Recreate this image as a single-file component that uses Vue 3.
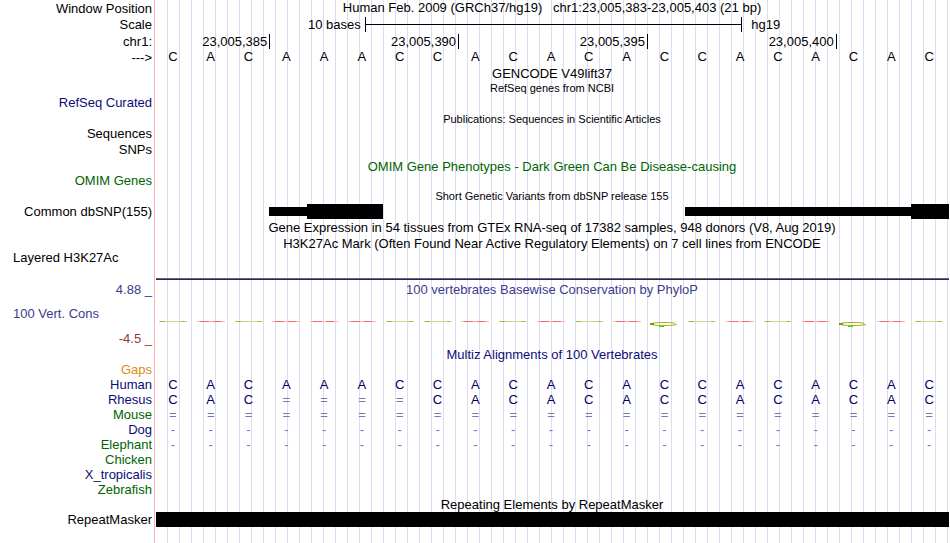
<script setup>
const sequence = 'CACAAACCACACACCACACAC'.split('')

const ticks = [
  { text: '23,005,385', cls: 'tick-a' },
  { text: '23,005,390', cls: 'tick-b' },
  { text: '23,005,395', cls: 'tick-c' },
  { text: '23,005,400', cls: 'tick-d' },
]

// one row for each species, in the order of the alignment
const species = [
  { name: 'Gaps', color: 'orange', bases: [] },
  { name: 'Human', color: 'navy', bases: sequence },
  { name: 'Rhesus', color: 'navy', bases: 'CAC====CACACACCACACAC'.split('') },
  { name: 'Mouse', color: 'green', bases: '='.repeat(21).split('') },
  { name: 'Dog', color: 'navy', bases: '-'.repeat(21).split('') },
  { name: 'Elephant', color: 'green', bases: '-'.repeat(21).split('') },
  { name: 'Chicken', color: 'green', bases: [] },
  { name: 'X_tropicalis', color: 'navy', bases: [] },
  { name: 'Zebrafish', color: 'green', bases: [] },
]

// positions where the conservation score drops below zero
const lowScores = [13, 18]

const isGap = (base) => base === '=' || base === '-'
</script>

<template>
  <main class="browser">
    <div class="row h16">
      <div class="label">Window Position</div>
      <div class="title raised">Human Feb. 2009 (GRCh37/hg19) &nbsp; chr1:23,005,383-23,005,403 (21 bp)</div>
    </div>
    <div class="row h17">
      <div class="label">Scale</div>
      <div class="ruler">
        <span class="scale-text">10 bases</span>
        <span class="scale-bar"></span>
        <span class="scale-db">hg19</span>
      </div>
    </div>
    <div class="row h17">
      <div class="label">chr1:</div>
      <div class="ruler">
        <span v-for="tick in ticks" :key="tick.text" class="tick" :class="tick.cls">{{ tick.text }}</span>
      </div>
    </div>
    <div class="row h15">
      <div class="label">---&gt;</div>
      <div class="bases raised">
        <span v-for="(base, i) in sequence" :key="i">{{ base }}</span>
      </div>
    </div>

    <div class="row h16">
      <div class="title">GENCODE V49lift37</div>
    </div>
    <div class="row h13">
      <div class="title small">RefSeq genes from NCBI</div>
    </div>
    <div class="row h16">
      <div class="label navy">RefSeq Curated</div>
    </div>
    <div class="row h16">
      <div class="title small">Publications: Sequences in Scientific Articles</div>
    </div>
    <div class="row h15">
      <div class="label">Sequences</div>
    </div>
    <div class="row h17">
      <div class="label">SNPs</div>
    </div>
    <div class="row h16">
      <div class="title green">OMIM Gene Phenotypes - Dark Green Can Be Disease-causing</div>
    </div>
    <div class="row h13">
      <div class="label green">OMIM Genes</div>
    </div>

    <div class="row h17">
      <div class="title small">Short Genetic Variants from dbSNP release 155</div>
    </div>
    <div class="row h15">
      <div class="label">Common dbSNP(155)</div>
      <div class="variants">
        <span class="thin first-thin"></span>
        <span class="thick first-thick"></span>
        <span class="thin second-thin"></span>
        <span class="thick second-thick"></span>
      </div>
    </div>
    <div class="row h17">
      <div class="title">Gene Expression in 54 tissues from GTEx RNA-seq of 17382 samples, 948 donors (V8, Aug 2019)</div>
    </div>
    <div class="row h15">
      <div class="title">H3K27Ac Mark (Often Found Near Active Regulatory Elements) on 7 cell lines from ENCODE</div>
    </div>
    <div class="row h13">
      <div class="label left">Layered H3K27Ac</div>
    </div>
    <div class="row h17">
      <div class="signal"></div>
    </div>

    <div class="row h16">
      <div class="label violet">4.88 _</div>
      <div class="title violet">100 vertebrates Basewise Conservation by PhyloP</div>
    </div>
    <div class="row h33">
      <div class="label left violet">100 Vert. Cons</div>
      <div class="bases scores">
        <svg v-for="(base, i) in sequence" :key="i" class="score" viewBox="0 0 30 8">
          <template v-if="lowScores.includes(i)">
            <path d="M26 3.5C24 2.5 20 2.5 15 2.5C7 2.5 3 2.9 3 4C3 5.2 8 5.5 15 5.5C21 5.5 25 5.3 28 4.4" fill="none" stroke="#a8a81c" />
            <path d="M1 3h4v2h-4z" fill="#8f8f00" />
            <path d="M10 6h5v1h-5z" fill="#00f000" />
          </template>
          <template v-else-if="base === 'A'">
            <path d="M1 1h28v1h-28z" fill="#ffb0b0" />
            <path d="M4 1h9v1h-9zM17 1h8v1h-8z" fill="#ff6868" />
          </template>
          <template v-else>
            <path d="M1 1h28v1h-28z" fill="#d4d48c" />
            <path d="M2 1h5v1h-5zM24 1h3v1h-3z" fill="#b0b03c" />
          </template>
        </svg>
      </div>
    </div>
    <div class="row h16">
      <div class="label maroon">-4.5 _</div>
    </div>

    <div class="row h16">
      <div class="title navy">Multiz Alignments of 100 Vertebrates</div>
    </div>
    <div v-for="row in species" :key="row.name" class="row h15">
      <div class="label" :class="row.color">{{ row.name }}</div>
      <div class="bases navy">
        <span v-for="(base, i) in row.bases" :key="i" :class="{ gap: isGap(base) }">{{ base }}</span>
      </div>
    </div>

    <div class="row h15">
      <div class="title">Repeating Elements by RepeatMasker</div>
    </div>
    <div class="row h15">
      <div class="label">RepeatMasker</div>
      <div class="repeat"></div>
    </div>
  </main>
</template>

<style>
body {
  margin: 0;
  background: #fff;
}
</style>

<style scoped>
/* the guide lines run behind every track */
.browser {
  min-height: 100vh;
  background:
    linear-gradient(#ffb4b4, #ffb4b4) 154px 0 / 1px 100% no-repeat,
    linear-gradient(#fff, #fff) 0 0 / 156px 100% no-repeat,
    repeating-linear-gradient(to right, #dcdcf5 0 1px, transparent 1px 12px) 11px 0;
  color: #000;
  font-family: "Liberation Sans", Arial, sans-serif;
  font-size: 13px;
  white-space: nowrap;
}

.row {
  display: grid;
  grid-template-columns: 154px minmax(0, 1fr);
  grid-template-rows: 100%;
  line-height: 15px;
}

.h13 { height: 13px; }
.h15 { height: 15px; }
.h16 { height: 16px; }
.h17 { height: 17px; }
.h33 { height: 33px; }

.label {
  grid-column: 1;
  align-self: center;
  padding-right: 2px;
  text-align: right;
}

.label.left {
  padding-left: 13px;
  text-align: left;
}

.title {
  grid-column: 2;
  align-self: center;
  text-align: center;
}

.small {
  padding-top: 2px;
  font-size: 11px;
}

.raised {
  padding-bottom: 2px;
}

/* scale and ticks, two columns for each base */
.ruler {
  display: grid;
  grid-template-columns: repeat(42, minmax(0, 1fr));
  align-items: center;
  padding-left: 3px;
}

.scale-text {
  grid-column: 1 / 12;
  padding-right: 4px;
  text-align: right;
}

.scale-bar {
  grid-column: 12 / 32;
  height: 15px;
  border-left: 1px solid #000;
  border-right: 1px solid #000;
  background: linear-gradient(#000, #000) center / 100% 1px no-repeat;
}

.scale-db {
  grid-column: 32 / 43;
  padding-left: 9px;
}

.tick {
  padding-right: 2px;
  border-right: 1px solid #000;
  text-align: right;
}

.tick-a { grid-column: 1 / 7; }
.tick-b { grid-column: 7 / 17; }
.tick-c { grid-column: 17 / 27; }
.tick-d { grid-column: 27 / 37; }

/* one column for each base */
.bases {
  display: grid;
  grid-template-columns: repeat(21, minmax(0, 1fr));
  align-content: center;
  padding-right: 2px;
  text-align: center;
}

.scores {
  align-content: end;
  justify-items: center;
  padding-bottom: 2px;
}

.score {
  display: block;
  width: 30px;
  height: 8px;
}

.variants {
  display: grid;
  grid-template-columns: repeat(21, minmax(0, 1fr));
  align-items: center;
  padding: 0 1px 0 2px;
}

.thin {
  height: 9px;
  background: #000;
}

.thick {
  height: 15px;
  background: #000;
}

.first-thin { grid-column: 4; }
.first-thick { grid-column: 5 / 7; }
.second-thin { grid-column: 15 / 21; }
.second-thick { grid-column: 21; }

.signal {
  grid-column: 2;
  align-self: end;
  height: 1px;
  margin: 0 1px 1px 2px;
  border-top: 1px solid #785a78;
  background: #28285a;
}

.repeat {
  margin: 0 1px 0 2px;
  background: #000;
}

.navy { color: #0c0c78; }
.bases.navy { color: #000064; }
.bases .gap { color: #7878b4; }
.green { color: #006400; }
.violet { color: #3c3c8c; }
.maroon { color: #8c3c3c; }
.orange { color: #e08a0c; }
</style>
